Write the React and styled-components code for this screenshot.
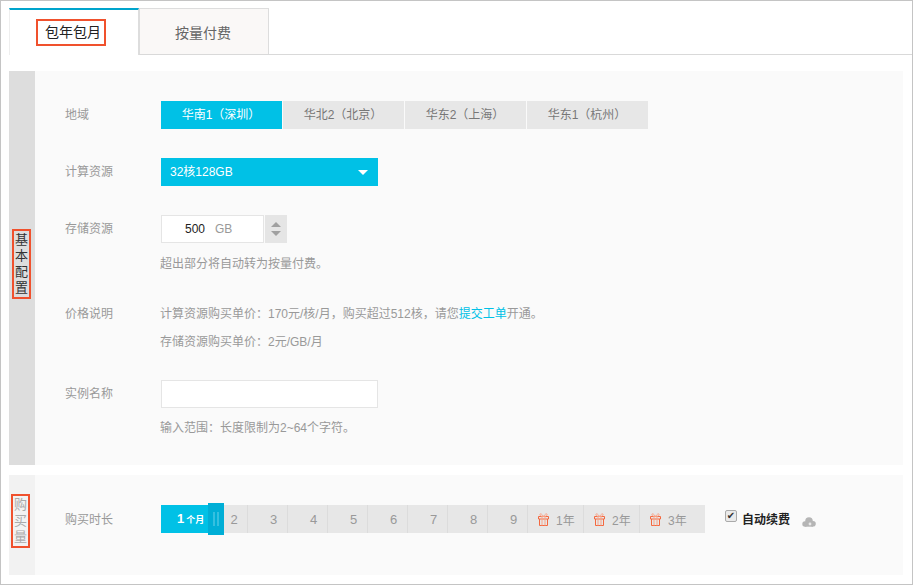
import React from 'react';
import styled, { createGlobalStyle } from 'styled-components';

const GlobalStyle = createGlobalStyle`
  html, body { margin: 0; padding: 0; background: #fff; }
  body { font-family: "Liberation Sans", "Noto Sans CJK SC", sans-serif; font-size: 12px; color: #999; }
  * { box-sizing: border-box; }
`;

const ACCENT = '#00c1e6';

const Page = styled.div`
  width: 913px;
  height: 585px;
  border: 1px solid #c4c4c4;
  padding-top: 7px;
  overflow: hidden;
`;

const TabBar = styled.div`
  display: flex;
  height: 47px;
  margin-left: 8px;
  border-bottom: 1px solid #d9d9d9;
`;

const Tab = styled.div`
  width: 130px;
  height: ${p => (p.$active ? '47px' : '46px')};
  display: flex;
  align-items: center;
  justify-content: center;
  font-size: 14px;
  color: ${p => (p.$active ? '#222' : '#666')};
  background: ${p => (p.$active ? '#fff' : '#faf8f7')};
  border-top: ${p => (p.$active ? '2px solid #00a4cc' : '1px solid #ddd')};
  border-right: 1px solid #ddd;
  border-left: ${p => (p.$active ? '1px solid #eee' : '1px solid #ddd')};
  padding-right: ${p => (p.$active ? '0' : '2px')};
`;

const Marked = styled.span`
  border: 2px solid #f0512d;
  padding: 2px 3px 2px 7px;
  line-height: 19px;
  margin-right: 6px;
`;

const Section = styled.section`
  display: flex;
  width: 894px;
  margin: ${p => p.$top} 0 0 8px;
  background: #fafafa;
`;

const Side = styled.div`
  width: 26px;
  flex: none;
  display: flex;
  align-items: center;
  background: ${p => (p.$light ? '#f2f2f2' : '#ddd')};
  padding-left: ${p => (p.$light ? '2px' : '3px')};
`;

const SideText = styled.div`
  width: 19px;
  margin-top: -8px;
  border: 2px solid #f0512d;
  text-align: center;
  font-size: 13px;
  line-height: 16px;
  padding: 1px 0;
  color: ${p => (p.$light ? '#aaa' : '#333')};
`;

const Body = styled.div`
  flex: 1;
  padding: ${p => p.$pad};
  display: flex;
  flex-direction: column;
`;

const Row = styled.div`
  display: flex;
  align-items: flex-start;
  margin-top: ${p => p.$top || '0'};
`;

const Label = styled.div`
  width: 96px;
  flex: none;
  line-height: ${p => p.$lh || '28px'};
  color: #999;
`;

const Field = styled.div`
  flex: 1;
  min-width: 0;
`;

const Segments = styled.div`
  display: flex;
  gap: 1px;
`;

const Segment = styled.div`
  width: 121px;
  height: 28px;
  line-height: 28px;
  padding-right: 1px;
  text-align: center;
  background: ${p => (p.$active ? ACCENT : '#e7e7e7')};
  color: ${p => (p.$active ? '#fff' : '#777')};
`;

const Select = styled.div`
  width: 217px;
  height: 28px;
  padding: 0 10px 4px 9px;
  display: flex;
  align-items: center;
  justify-content: space-between;
  background: ${ACCENT};
  color: #fff;
`;

const Caret = styled.span`
  width: 0;
  height: 0;
  margin-top: 4px;
  border-left: 5px solid transparent;
  border-right: 5px solid transparent;
  border-top: 5px solid #fff;
`;

const StorageRow = styled.div`
  display: flex;
  gap: 1px;
`;

const StorageInput = styled.div`
  width: 103px;
  height: 28px;
  display: flex;
  align-items: center;
  padding-left: 23px;
  gap: 10px;
  background: #fff;
  border: 1px solid #e5e5e5;
  color: #222;
`;

const Unit = styled.span`
  color: #999;
`;

const Stepper = styled.div`
  width: 22px;
  height: 28px;
  background: #e5e5e5;
  display: flex;
  flex-direction: column;
  align-items: center;
  justify-content: center;
  gap: 4px;
`;

const StepArrow = styled.span`
  width: 0;
  height: 0;
  border-left: 5px solid transparent;
  border-right: 5px solid transparent;
  ${p => (p.$down ? 'border-top: 5px solid #a0a0a0;' : 'border-bottom: 5px solid #a0a0a0;')}
`;

const Hint = styled.div`
  line-height: 20px;
  margin-top: ${p => p.$top};
  color: #999;
  margin-left: -1px;
`;

const PriceLine = styled.div`
  line-height: 28px;
  color: #999;
  margin-left: -1px;
`;

const Link = styled.a`
  color: ${ACCENT};
  text-decoration: none;
`;

const TextBox = styled.div`
  width: 217px;
  height: 28px;
  background: #fff;
  border: 1px solid #e5e5e5;
`;

const DurationRow = styled.div`
  display: flex;
  align-items: center;
`;

const Slider = styled.div`
  display: flex;
  width: 544px;
  height: 28px;
  background: #e7e7e7;
`;

const Filled = styled.div`
  width: 48px;
  padding-left: 16px;
  background: ${ACCENT};
  color: #fff;
  font-weight: bold;
  font-size: 13px;
  line-height: 28px;
  white-space: nowrap;
`;

const Tiny = styled.span`
  font-size: 9px;
  margin-left: 2px;
`;

const Handle = styled.div`
  width: 16px;
  height: 32px;
  margin-top: -2px;
  flex: none;
  display: flex;
  align-items: center;
  justify-content: center;
  gap: 2px;
  background: #00aed6;
`;

const Grip = styled.span`
  width: 2px;
  height: 14px;
  background: #35c0e0;
`;

const MonthCell = styled.div`
  width: ${p => (p.$first ? '24px' : '40px')};
  flex: none;
  display: flex;
  align-items: center;
  justify-content: center;
  padding: ${p => (p.$first ? '0 3px 0 0' : '0 0 0 12px')};
  color: #999;
  font-size: 13px;
  border-right: 1px solid #dcdcdc;
`;

const YearCell = styled.div`
  width: ${p => (p.$last ? '65px' : '56px')};
  flex: none;
  display: flex;
  align-items: center;
  gap: 7px;
  padding-left: 10px;
  color: #999;
  border-right: ${p => (p.$last ? '0' : '1px solid #dcdcdc')};
`;

const Renew = styled.label`
  display: flex;
  align-items: center;
  margin: -2px 0 0 20px;
  color: #222;
  font-weight: bold;
`;

const Check = styled.input`
  appearance: none;
  position: relative;
  width: 12px;
  height: 12px;
  margin: -5px 5px 0 0;
  border: 1px solid #aaa;
  border-radius: 2px;
  background: #eaeaea;
  &:checked::after {
    content: '✔';
    position: absolute;
    left: 0;
    top: -1px;
    width: 10px;
    text-align: center;
    font: 10px/12px "DejaVu Sans", sans-serif;
    color: #333;
  }
`;

const CloudWrap = styled.span`
  display: inline-flex;
  margin: 8px 0 0 12px;
`;

const Gift = () => (
  <svg width="11" height="13" viewBox="0 0 11 13" fill="none" stroke="#f4683f" strokeWidth="1">
    <path d="M1.5 6v6.5h8V6" />
    <path d="M.5 3.5h10V6H.5z" />
    <path d="M4 3.5v9M7 3.5v9" stroke="#f9a58a" />
    <path d="M5.5 3.5C3.5.2 1.5.2 2 2c.2.9 1.5 1.5 3.5 1.5zM5.5 3.5c2-3.3 4-3.3 3.5-1.5-.2.9-1.5 1.5-3.5 1.5z" stroke="#f9a58a" />
  </svg>
);

const Cloud = () => (
  <svg width="14" height="10" viewBox="0 0 14 10" fill="#b5b5b5">
    <circle cx="3" cy="7" r="2.7" />
    <circle cx="7" cy="4" r="3.8" />
    <circle cx="11" cy="6.8" r="2.8" />
    <rect x="3" y="6" width="8" height="3.7" />
    <circle cx="8" cy="7" r="1.4" fill="#e8e8e8" />
  </svg>
);

const regions = ['华南1（深圳）', '华北2（北京）', '华东2（上海）', '华东1（杭州）'];
const months = [2, 3, 4, 5, 6, 7, 8, 9];
const years = ['1年', '2年', '3年'];

const App = () => (
  <>
    <GlobalStyle />
    <Page>
      <TabBar>
        <Tab $active><Marked>包年包月</Marked></Tab>
        <Tab>按量付费</Tab>
      </TabBar>

      <Section $top="16px">
        <Side><SideText>基本配置</SideText></Side>
        <Body $pad="30px 0 27px 30px">
          <Row>
            <Label>地域</Label>
            <Field>
              <Segments>
                {regions.map((r, i) => <Segment key={r} $active={i === 0}>{r}</Segment>)}
              </Segments>
            </Field>
          </Row>
          <Row $top="29px">
            <Label>计算资源</Label>
            <Field>
              <Select>32核128GB<Caret /></Select>
            </Field>
          </Row>
          <Row $top="29px">
            <Label>存储资源</Label>
            <Field>
              <StorageRow>
                <StorageInput>500<Unit>GB</Unit></StorageInput>
                <Stepper><StepArrow /><StepArrow $down /></Stepper>
              </StorageRow>
              <Hint $top="11px">超出部分将自动转为按量付费。</Hint>
            </Field>
          </Row>
          <Row $top="26px">
            <Label>价格说明</Label>
            <Field>
              <PriceLine>计算资源购买单价：170元/核/月，购买超过512核，请您<Link href="#">提交工单</Link>开通。</PriceLine>
              <PriceLine>存储资源购买单价：2元/GB/月</PriceLine>
            </Field>
          </Row>
          <Row $top="24px">
            <Label>实例名称</Label>
            <Field>
              <TextBox />
              <Hint $top="10px">输入范围：长度限制为2~64个字符。</Hint>
            </Field>
          </Row>
        </Body>
      </Section>

      <Section $top="10px">
        <Side $light><SideText $light>购买量</SideText></Side>
        <Body $pad="30px 0 40px 30px">
          <Row>
            <Label $lh="30px">购买时长</Label>
            <Field>
              <DurationRow>
                <Slider>
                  <Filled>1<Tiny>个月</Tiny></Filled>
                  <Handle><Grip /><Grip /></Handle>
                  {months.map((m, i) => <MonthCell key={m} $first={i === 0}>{m}</MonthCell>)}
                  {years.map((y, i) => (
                    <YearCell key={y} $last={i === 2}><Gift />{y}</YearCell>
                  ))}
                </Slider>
                <Renew>
                  <Check type="checkbox" defaultChecked />自动续费
                  <CloudWrap><Cloud /></CloudWrap>
                </Renew>
              </DurationRow>
            </Field>
          </Row>
        </Body>
      </Section>
    </Page>
  </>
);

export default App;
